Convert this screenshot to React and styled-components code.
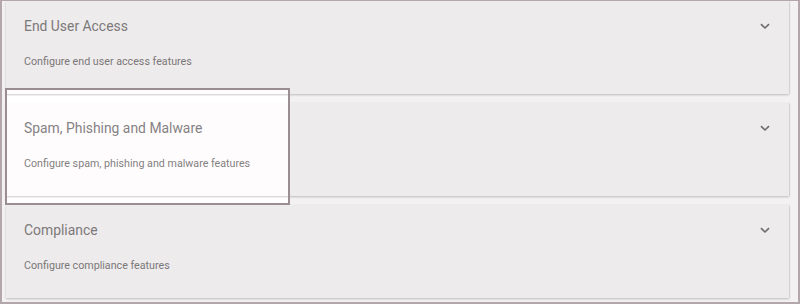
import React from 'react'
import styled, { createGlobalStyle } from 'styled-components'

const Global = createGlobalStyle`
  html, body {
    margin: 0;
    padding: 0;
    background: #f3f1f2;
    font-family: Roboto, "Liberation Sans", sans-serif;
  }
`

const Frame = styled.div`
  position: relative;
  box-sizing: border-box;
  width: 800px;
  height: 304px;
  border-top: 1px solid #b3a7ab;
  border-left: 2px solid #b3a7ab;
  border-right: 2px solid #b3a7ab;
  border-bottom: 2px solid #b3a7ab;
  padding: 0 9px 0 4px;
  display: flex;
  flex-direction: column;
  gap: 9px;
  overflow: hidden;
`

const Card = styled.div`
  position: relative;
  box-sizing: border-box;
  height: 93px;
  background: #eeebec;
  box-shadow: 0 1px 2px rgba(0, 0, 0, 0.22), 1px 0 1px rgba(0, 0, 0, 0.06);
  padding: 15px 18px 0 18px;
  display: flex;
  flex-direction: column;
`

const Header = styled.div`
  display: flex;
  align-items: center;
  justify-content: space-between;
  height: 20px;
`

const Title = styled.div`
  font-size: 13.9px;
  color: #7c797a;
  line-height: 20px;
`

const Desc = styled.div`
  margin-top: 18px;
  font-size: 10.7px;
  line-height: 16px;
  color: #7a7778;
`

const Chevron = styled.svg`
  width: 12px;
  height: 12px;
  color: #6c6a6b;
`

const Highlight = styled.div`
  position: absolute;
  left: 3px;
  top: 87px;
  width: 285px;
  height: 117px;
  box-sizing: border-box;
  border: 2px solid #9b8e93;
  backdrop-filter: brightness(1.072);
  pointer-events: none;
`

const items = [
  { title: 'End User Access', desc: 'Configure end user access features' },
  { title: 'Spam, Phishing and Malware', desc: 'Configure spam, phishing and malware features' },
  { title: 'Compliance', desc: 'Configure compliance features' },
]

const Section = ({ title, desc }) => (
  <Card>
    <Header>
      <Title>{title}</Title>
      <Chevron viewBox="0 0 12 12">
        <path d="M2 4.2 L6 8 L10 4.2" fill="none" stroke="currentColor" strokeWidth="1.6" />
      </Chevron>
    </Header>
    <Desc>{desc}</Desc>
  </Card>
)

export default function App() {
  return (
    <>
      <Global />
      <Frame>
        {items.map((it) => (
          <Section key={it.title} {...it} />
        ))}
        <Highlight />
      </Frame>
    </>
  )
}
